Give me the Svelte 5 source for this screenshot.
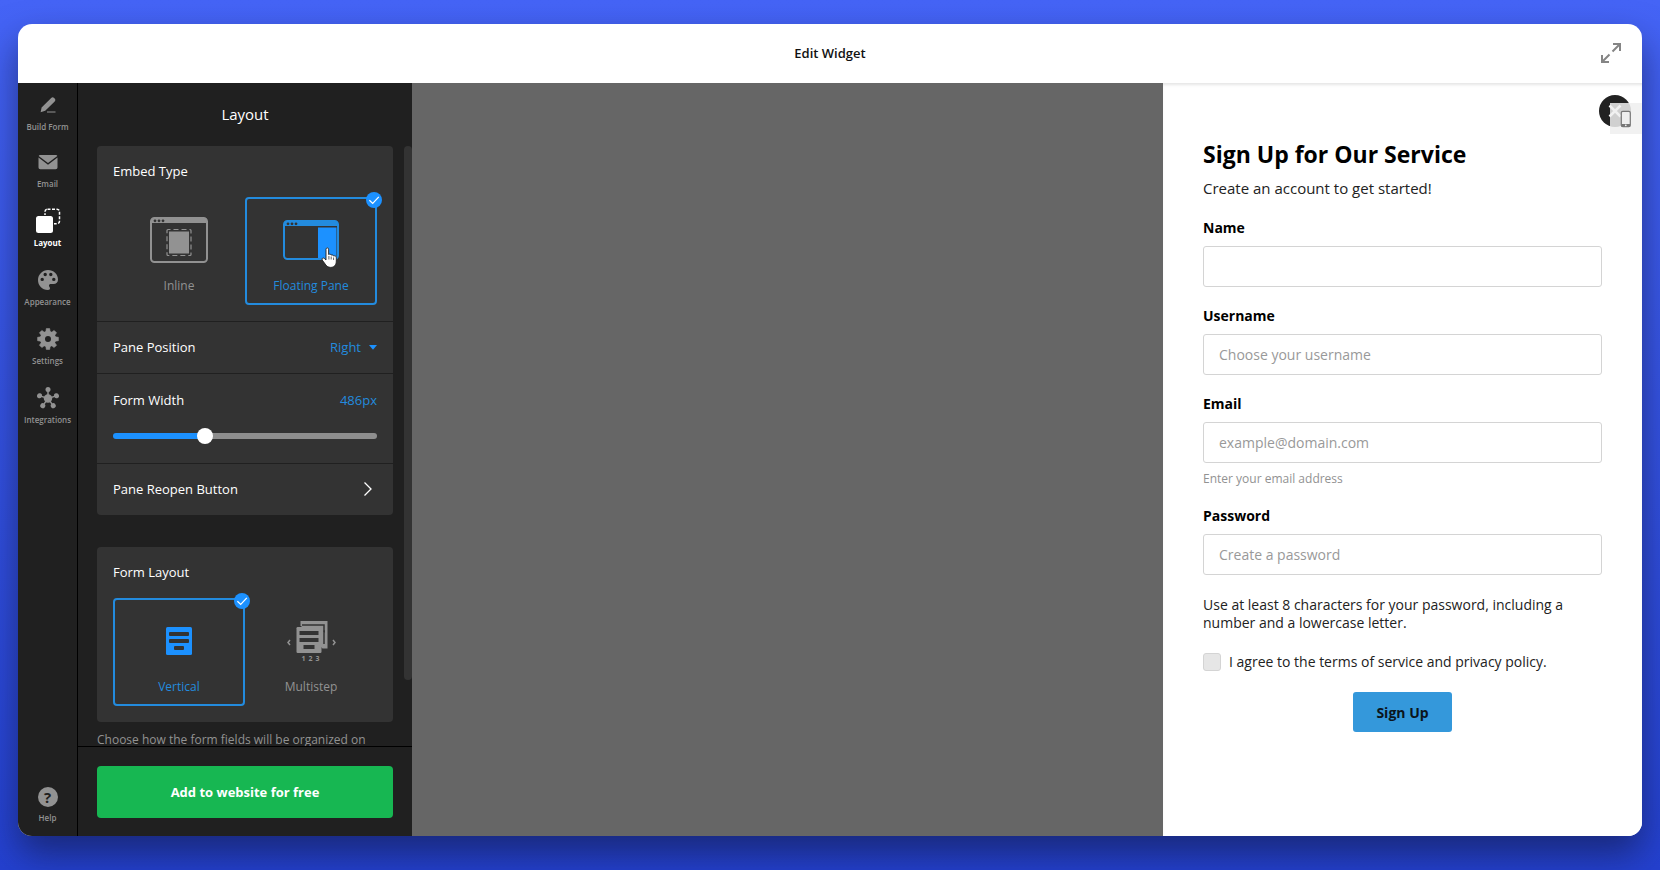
<script>
  let embedType = $state('floating');
  let formLayout = $state('vertical');
  let formWidth = $state(486);
  let position = $state('Right');

  const minWidth = 200;
  const maxWidth = 1040;
  let fill = $derived(((formWidth - minWidth) / (maxWidth - minWidth)) * 100);

  const nav = [
    { id: 'build', label: 'Build Form' },
    { id: 'email', label: 'Email' },
    { id: 'layout', label: 'Layout', active: true },
    { id: 'appearance', label: 'Appearance' },
    { id: 'settings', label: 'Settings' },
    { id: 'integrations', label: 'Integrations' }
  ];
  const teeth = [0, 45, 90, 135, 180, 225, 270, 315];
  const spokes = [0, 72, 144, 216, 288];
</script>

{#snippet check()}
  <span class="check">
    <svg viewBox="0 0 16 16" width="16" height="16"><circle cx="8" cy="8" r="8" fill="#1c91ff" /><path d="M3.4 8.2 6.7 11.4 12.8 4.8" fill="none" stroke="#fff" stroke-width="1.2" /></svg>
  </span>
{/snippet}

<div class="page">
  <div class="window">
    <header>
      <h1>Edit Widget</h1>
      <button class="expand" aria-label="Expand">
        <svg viewBox="0 0 22 22" width="22" height="22" fill="none" stroke="#858585" stroke-width="2">
          <path d="M12.5 9.5 20 2M13 2h7v7M9.500 12.500 2 20M2 13v7h7" />
        </svg>
      </button>
    </header>

    <div class="body">
      <nav>
        {#each nav as item}
          <button class="nav-item" class:active={item.active}>
            <svg viewBox="0 0 26 26" width="26" height="26" fill="currentColor">
              {#if item.id === 'build'}
                <path d="M5.600 20.300 6.600 15.600 16.200 6a2 2 0 0 1 2.900 0l.6.6a2 2 0 0 1 0 2.900L10.200 18.800Z" />
                <path d="M12 19.600h8.500v1H12z" />
              {:else if item.id === 'email'}
                <path d="M5 6h16a1.500 1.500 0 0 1 1.300 1L13 14 3.700 7A1.500 1.500 0 0 1 5 6Z" />
                <path d="M3.500 8.600 13 15.800l9.500-7.200V18.500a1.800 1.800 0 0 1-1.800 1.800H5.300a1.800 1.800 0 0 1-1.800-1.800Z" />
              {:else if item.id === 'layout'}
                <rect x="10" y="1.200" width="14.500" height="14.500" rx="2.500" fill="none" stroke="currentColor" stroke-width="1.500" stroke-dasharray="3 1.500" />
                <rect x=".5" y="7" width="18.500" height="18.500" rx="3" fill="#202020" />
                <rect x="1" y="8" width="17" height="17" rx="2.500" />
              {:else if item.id === 'appearance'}
                <path fill-rule="evenodd" d="M13 3C7.500 3 3 7.500 3 13s4 10 10 10c1.500 0 2-.8 2-1.700 0-1.300-1.300-1.800-1-3 .2-.9 1-1.300 2-1.300h2.500c2.700 0 4.500-1.700 4.500-4.500C23 7 18.500 3 13 3ZM7.200 10.700a1.700 1.700 0 1 1 0 3.400 1.700 1.700 0 0 1 0-3.400Zm3-4.900a1.700 1.700 0 1 1 0 3.400 1.700 1.700 0 0 1 0-3.400Zm5.600 0a1.700 1.700 0 1 1 0 3.400 1.700 1.700 0 0 1 0-3.400Zm3 4.900a1.700 1.700 0 1 1 0 3.400 1.700 1.700 0 0 1 0-3.400Z" />
              {:else if item.id === 'settings'}
                {#each teeth as a}
                  <path d="M10.800 6 11.300 2.600h3.400L15.200 6z" stroke="currentColor" stroke-width=".6" stroke-linejoin="round" transform="rotate({a} 13 13)" />
                {/each}
                <circle cx="13" cy="13" r="5.500" fill="none" stroke="currentColor" stroke-width="5" />
              {:else}
                {#each spokes as a}
                  <g transform="rotate({a} 13 13.500)">
                    <path d="M13 13.500V5" stroke="currentColor" stroke-width="1.500" />
                    <circle cx="13" cy="4.600" r="2.500" />
                  </g>
                {/each}
                <circle cx="13" cy="13.500" r="4.200" />
              {/if}
            </svg>
            <span>{item.label}</span>
          </button>
        {/each}
        <button class="nav-item help">
          <span class="mark">?</span>
          <span>Help</span>
        </button>
      </nav>

      <aside>
        <h2>Layout</h2>
        <div class="scroller">
          <div class="settings">
            <section class="card">
              <fieldset class="group">
                <legend>Embed Type</legend>
                <div class="tiles">
                  <label class="tile" class:selected={embedType === 'inline'}>
                    <input type="radio" name="embed" value="inline" bind:group={embedType} />
                    <svg viewBox="0 0 58 46" width="58" height="46">
                      <rect x="1" y="1" width="56" height="44" rx="3.500" fill="none" stroke="currentColor" stroke-width="2" />
                      <path d="M1 6V4a3 3 0 0 1 3-3h50a3 3 0 0 1 3 3v2z" fill="currentColor" />
                      <g fill="#333"><circle cx="5" cy="3.800" r="1.400" /><circle cx="9" cy="3.800" r="1.400" /><circle cx="13" cy="3.800" r="1.400" /></g>
                      <rect x="17" y="12.500" width="24" height="26" rx="1" fill="none" stroke="currentColor" stroke-width="1.200" stroke-dasharray="5 3" stroke-dashoffset="2.500" />
                      <rect x="19" y="14.500" width="20" height="22" fill="currentColor" />
                    </svg>
                    <span>Inline</span>
                    {#if embedType === 'inline'}{@render check()}{/if}
                  </label>
                  <label class="tile" class:selected={embedType === 'floating'}>
                    <input type="radio" name="embed" value="floating" bind:group={embedType} />
                    <svg viewBox="0 0 56 46" width="56" height="46">
                      <rect x="1" y="4" width="54" height="38" rx="3.500" fill="none" stroke="currentColor" stroke-width="2" />
                      <path d="M1 9V7a3 3 0 0 1 3-3h48a3 3 0 0 1 3 3v2z" fill="currentColor" />
                      <g fill="#333"><circle cx="5" cy="6.800" r="1.400" /><circle cx="9" cy="6.800" r="1.400" /><circle cx="13" cy="6.800" r="1.400" /></g>
                      <path d="M35 10.500h18.500V41H35z" fill="#1c91ff" />
                    </svg>
                    <span>Floating Pane</span>
                    {#if embedType === 'floating'}{@render check()}{/if}
                    <svg class="pointer" viewBox="0 0 17 21" width="17" height="21">
                      <path d="M5 2.200C5 .4 7.600.4 7.600 2.200V7.500c1-.7 2.200-.3 2.500.6 1-.5 2.100-.1 2.400.9 1.300-.5 2.800.1 2.800 1.700V14c0 3.600-1.800 6.400-5.600 6.400-2.800 0-4.300-1.400-5.500-3.300L1.200 13c-.8-1.500.9-2.700 2.200-1.500L5 13Z" fill="#fff" stroke="#222" stroke-width=".9" />
                      <path d="M7.900 9v3.500M10.200 9.500v3M12.600 10.500v2.500" stroke="#333" stroke-width=".8" />
                    </svg>
                  </label>
                </div>
              </fieldset>
              <div class="row">
                <label for="position">Pane Position</label>
                <div class="picker">
                  <select id="position" bind:value={position}>
                    <option>Right</option>
                    <option>Left</option>
                  </select>
                  <svg viewBox="0 0 8 6" width="8" height="6"><path d="M0 1h8L4 5.800z" fill="#1c91ff" /></svg>
                </div>
              </div>
              <div class="range">
                <div class="range-head">
                  <label for="width">Form Width</label>
                  <output for="width">{formWidth}px</output>
                </div>
                <input id="width" type="range" min={minWidth} max={maxWidth} bind:value={formWidth} style="--fill: {fill}%" />
              </div>
              <button class="row link">
                <span>Pane Reopen Button</span>
                <svg viewBox="0 0 10 16" width="10" height="16"><path d="M1.500 1.500 8 8l-6.500 6.500" fill="none" stroke="#fff" stroke-width="1.300" /></svg>
              </button>
            </section>

            <section class="card second">
              <fieldset class="group">
                <legend>Form Layout</legend>
                <div class="tiles">
                  <label class="tile" class:selected={formLayout === 'vertical'}>
                    <input type="radio" name="layout" value="vertical" bind:group={formLayout} />
                    <svg viewBox="0 0 50 46" width="50" height="46">
                      <rect x="12" y="9" width="26" height="28" rx="1.500" fill="#1c91ff" />
                      <g fill="#333"><rect x="15" y="14" width="20" height="4" rx="1" /><rect x="15" y="21" width="20" height="4" rx="1" /><rect x="20" y="28" width="10" height="4" rx="1" /></g>
                    </svg>
                    <span>Vertical</span>
                    {#if formLayout === 'vertical'}{@render check()}{/if}
                  </label>
                  <label class="tile" class:selected={formLayout === 'multistep'}>
                    <input type="radio" name="layout" value="multistep" bind:group={formLayout} />
                    <svg viewBox="0 0 50 46" width="50" height="46">
                      <path d="M14.500 7.500V3h27v27.500h-5" fill="currentColor" />
                      <path d="M16 7h22v19" fill="none" stroke="#333" stroke-width="1.500" />
                      <path d="M37 13l2-1v3z" fill="#333" />
                      <rect x="10.500" y="9" width="25" height="26" rx="1.200" fill="currentColor" />
                      <g fill="#333"><rect x="13.500" y="13" width="19" height="4" /><rect x="13.500" y="20" width="19" height="4" /><rect x="17.500" y="27" width="11" height="4" /></g>
                      <path d="M4 22 2 24.500 4 27M47 22l2 2.500-2 2.500" fill="none" stroke="currentColor" stroke-width="1.500" />
                      <g fill="currentColor" font-size="7" font-weight="700" text-anchor="middle"><text x="17.500" y="43">1</text><text x="24.500" y="43">2</text><text x="31.500" y="43">3</text></g>
                    </svg>
                    <span>Multistep</span>
                    {#if formLayout === 'multistep'}{@render check()}{/if}
                  </label>
                </div>
              </fieldset>
            </section>
            <p class="note">Choose how the form fields will be organized on</p>
          </div>
          <div class="track"><div class="thumb"></div></div>
        </div>
        <div class="footer"><button>Add to website for free</button></div>
      </aside>

      <main>
        <div class="overlay"></div>
        <form class="pane" onsubmit={(e) => e.preventDefault()}>
          <button type="button" class="close" aria-label="Close">
            <svg viewBox="0 0 14 14" width="14" height="14"><path d="M1.500 1.500 12.500 12.500M12.500 1.500 1.500 12.500" stroke="#fff" stroke-width="2.500" /></svg>
          </button>
          <button type="button" class="device" aria-label="Mobile preview">
            <svg viewBox="0 0 12 18" width="12" height="18"><rect x="1.300" y="1.300" width="9" height="15.400" rx="1.500" fill="#eee" stroke="#777" stroke-width="1.200" /><path d="M1.500 14h8.600v2.600H1.500z" fill="#777" /><circle cx="5.800" cy="15.300" r=".9" fill="#eee" /></svg>
          </button>
          <h2>Sign Up for Our Service</h2>
          <p class="sub">Create an account to get started!</p>

          <div class="field">
            <label for="name">Name</label>
            <input id="name" type="text" />
          </div>
          <div class="field">
            <label for="username">Username</label>
            <input id="username" type="text" placeholder="Choose your username" />
          </div>
          <div class="field">
            <label for="mail">Email</label>
            <input id="mail" type="email" placeholder="example@domain.com" />
            <small>Enter your email address</small>
          </div>
          <div class="field">
            <label for="password">Password</label>
            <input id="password" type="password" placeholder="Create a password" />
          </div>
          <p class="hint">Use at least 8 characters for your password, including a number and a lowercase letter.</p>
          <label class="agree"><input type="checkbox" /><span>I agree to the terms of service and privacy policy.</span></label>
          <button class="submit">Sign Up</button>
        </form>
      </main>
    </div>
  </div>
</div>

<style>
  :global(body) { margin: 0; }
  .page, .page * { box-sizing: border-box; }
  .page {
    min-height: 100vh;
    display: flex;
    padding: 24px 18px 34px;
    background: linear-gradient(#4564f6, #2441d0);
    font-family: "Open Sans", "Noto Sans", sans-serif;
    font-size: 13px;
    overflow: hidden;
  }
  button, input, select { font: inherit; color: inherit; }
  button { border: 0; padding: 0; background: none; cursor: pointer; }
  h1, h2, p { margin: 0; }
  svg { display: block; flex: none; }

  .window {
    flex: 1;
    display: flex;
    flex-direction: column;
    border-radius: 14px;
    overflow: hidden;
    background: #fff;
    box-shadow: 0 18px 36px rgba(16, 24, 64, 0.6);
  }
  header {
    position: relative;
    height: 59px;
    padding-bottom: 1px;
    display: flex;
    align-items: center;
    justify-content: center;
  }
  h1 { font-size: 13px; font-weight: 600; line-height: 18px; color: #111; }
  .expand { position: absolute; right: 20px; top: 18px; }

  .body { flex: 1; display: flex; min-height: 0; }
  nav {
    width: 60px;
    display: flex;
    flex-direction: column;
    background: #202020;
    border-right: 1px solid #000;
    padding-top: 9px;
  }
  .nav-item {
    height: 59px;
    display: flex;
    flex-direction: column;
    align-items: center;
    gap: 3px;
    color: #929292;
    font-size: 8px;
    line-height: 12px;
    font-weight: 600;
    white-space: nowrap;
  }
  .nav-item:first-child { height: 57px; }
  .nav-item.active { color: #fff; font-weight: 700; }
  .help { margin-top: auto; height: 49px; gap: 5px; }
  .mark {
    width: 20px;
    height: 20px;
    border-radius: 50%;
    background: #929292;
    color: #202020;
    font-size: 15px;
    line-height: 20px;
    font-weight: 700;
  }

  aside {
    width: 334px;
    display: flex;
    flex-direction: column;
    background: #202020;
    color: #fff;
  }
  aside h2 {
    height: 63px;
    line-height: 62px;
    text-align: center;
    font-size: 15px;
    font-weight: 400;
  }
  .scroller { flex: 1 1 0; min-height: 0; display: flex; overflow: hidden; }
  .settings { flex: 1; padding-left: 19px; }
  .track { width: 8px; margin-left: 11px; }
  .thumb { height: 89%; border-radius: 4px; background: #333; }
  .card { background: #333; border-radius: 4px; }
  .second { margin-top: 32px; }
  .group { border: 0; margin: 0; padding: 15px 16px 16px; }
  legend { float: left; width: 100%; padding: 0; line-height: 20px; font-weight: 500; }
  .tiles { display: flex; clear: both; padding-top: 16px; }
  .tile {
    position: relative;
    flex: 1;
    height: 108px;
    display: flex;
    flex-direction: column;
    align-items: center;
    gap: 13px;
    padding-top: 18px;
    border: 2px solid transparent;
    border-radius: 4px;
    color: #929292;
    font-size: 12px;
    line-height: 20px;
  }
  .tile input { position: absolute; opacity: 0; margin: 0; }
  .tile.selected { border-color: #238bde; color: #238bde; }
  .check { position: absolute; right: -7px; top: -7px; }
  .pointer { position: absolute; left: 74px; top: 48px; }

  .row {
    height: 52px;
    display: flex;
    align-items: center;
    justify-content: space-between;
    padding: 0 16px 1px;
    border-top: 1px solid #202020;
    font-weight: 500;
  }
  .picker { display: flex; align-items: center; gap: 8px; color: #238bde; font-weight: 400; }
  select { appearance: none; border: 0; padding: 0; background: none; width: 60px; text-align-last: right; }
  .range { border-top: 1px solid #202020; padding: 16px; height: 90px; }
  .range-head { display: flex; justify-content: space-between; line-height: 20px; font-weight: 500; }
  output { color: #238bde; font-weight: 400; }
  .range input {
    appearance: none;
    display: block;
    width: 100%;
    height: 16px;
    margin: 18px 0 0;
    background: none;
  }
  .range input::-webkit-slider-runnable-track {
    height: 6px;
    border-radius: 3px;
    background: linear-gradient(90deg, #1c91ff var(--fill), #8e8e8e var(--fill));
  }
  .range input::-webkit-slider-thumb {
    appearance: none;
    width: 16px;
    height: 16px;
    margin-top: -5px;
    border-radius: 50%;
    background: #fff;
  }
  .link { width: 100%; }
  .link svg { margin-right: 4px; }
  .note { margin-top: 8px; font-size: 12px; line-height: 20px; color: #929292; white-space: nowrap; }
  .footer { border-top: 1px solid #000; padding: 19px; height: 90px; }
  .footer button {
    width: 100%;
    height: 52px;
    padding-bottom: 1px;
    border-radius: 4px;
    background: #17b752;
    color: #fff;
    font-weight: 700;
  }

  main { flex: 1; display: flex; }
  .overlay { flex: 1; background: #666; }
  .pane {
    position: relative;
    width: 479px;
    padding: 53px 40px 0;
    display: flex;
    flex-direction: column;
    background: #fff;
    box-shadow: inset 0 3px 3px -1px #e6e6e6;
    color: #222;
    font-size: 14px;
  }
  .close {
    position: absolute;
    right: 11px;
    top: 12px;
    width: 32px;
    height: 32px;
    display: grid;
    place-items: center;
    border-radius: 50%;
    background: #222;
  }
  .device {
    position: absolute;
    right: 0;
    top: 20px;
    width: 32px;
    height: 31px;
    display: grid;
    place-items: center;
    background: rgba(238, 238, 238, 0.85);
  }
  .pane h2 { font-size: 23px; line-height: 36px; font-weight: 700; color: #000; }
  .sub { margin: 4px 0 18px; font-size: 15px; line-height: 24px; }
  .field { display: flex; flex-direction: column; margin-bottom: 19px; }
  .field label { font-weight: 700; line-height: 20px; margin-bottom: 8px; color: #000; }
  .field input {
    width: 100%;
    height: 41px;
    border: 1px solid #d4d4d4;
    border-radius: 3px;
    padding: 0 15px;
    background: #fff;
  }
  .field input::placeholder { color: #999; opacity: 1; }
  small { margin-top: 7px; margin-bottom: -1px; font-size: 12px; line-height: 18px; color: #929292; }
  .hint { line-height: 18px; margin-top: 2px; }
  .agree { display: flex; align-items: center; gap: 8px; margin-top: 20px; line-height: 20px; }
  .agree input {
    appearance: none;
    width: 18px;
    height: 18px;
    margin: 0;
    border: 1px solid #d4d4d4;
    border-radius: 3px;
    background: #e6e6e6;
  }
  .submit {
    align-self: center;
    margin-top: 20px;
    width: 99px;
    height: 40px;
    border-radius: 3px;
    background: #3498db;
    color: #0b151d;
    font-weight: 700;
  }
</style>
